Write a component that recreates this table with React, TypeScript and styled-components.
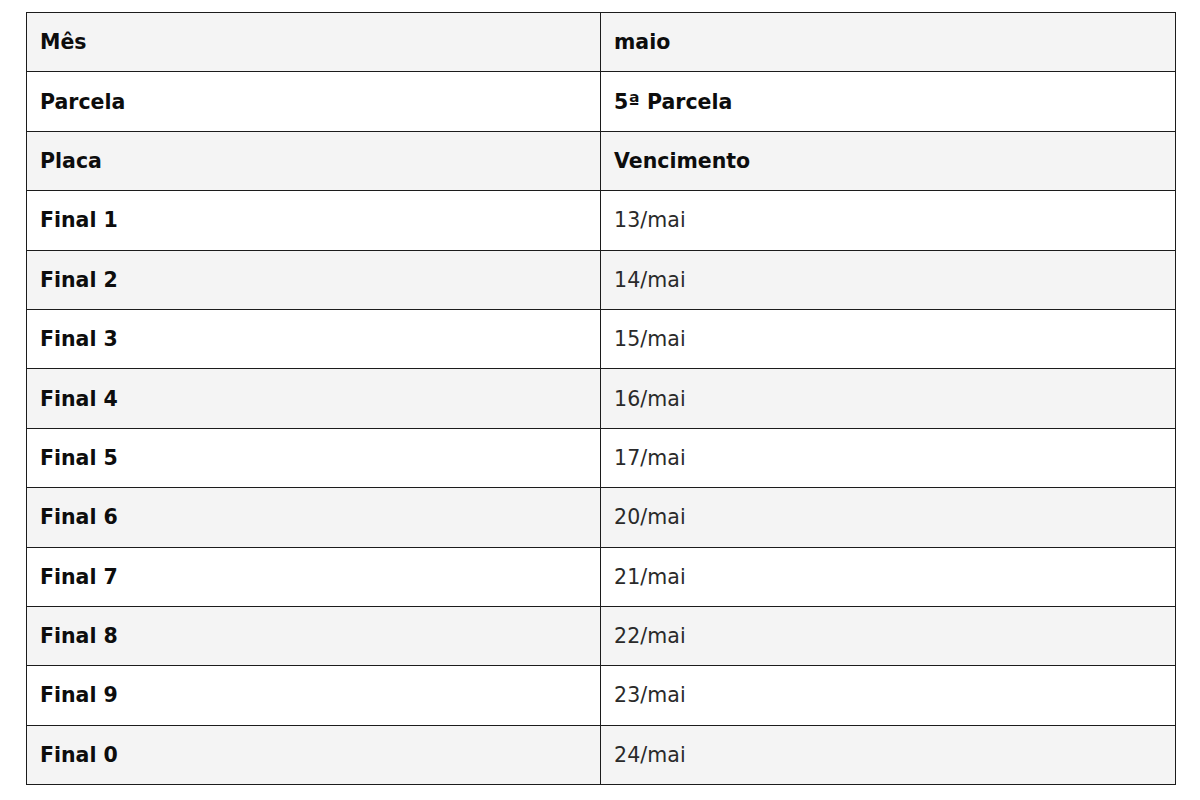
import React from "react";
import styled, { createGlobalStyle } from "styled-components";

const GlobalStyle = createGlobalStyle`
  html, body {
    margin: 0;
    padding: 0;
    background: #ffffff;
  }
`;

const Page = styled.div`
  padding: 12px 24px 0 26px;
  font-family: "DejaVu Sans", "Inter", sans-serif;
`;

const Table = styled.table`
  width: 1150px;
  border-collapse: collapse;
  border: 1px solid #1c1c1c;
  table-layout: fixed;
`;

const Row = styled.tr<{ $shaded: boolean }>`
  height: 59.4px;
  background: ${(p) => (p.$shaded ? "#f4f4f4" : "#ffffff")};
`;

const Cell = styled.td<{ $bold?: boolean }>`
  border: 1px solid #1c1c1c;
  padding: 0 13px;
  vertical-align: middle;
  font-size: 20.5px;
  font-weight: ${(p) => (p.$bold ? 700 : 400)};
  color: ${(p) => (p.$bold ? "#0d0d0d" : "#2a2a2a")};
  letter-spacing: ${(p) => (p.$bold ? "0" : "0.1px")};
  white-space: nowrap;
`;

const FirstCol = styled.col`
  width: 574px;
`;

type Line = { label: string; value: string; boldValue?: boolean };

const lines: Line[] = [
  { label: "Mês", value: "maio", boldValue: true },
  { label: "Parcela", value: "5ª Parcela", boldValue: true },
  { label: "Placa", value: "Vencimento", boldValue: true },
  { label: "Final 1", value: "13/mai" },
  { label: "Final 2", value: "14/mai" },
  { label: "Final 3", value: "15/mai" },
  { label: "Final 4", value: "16/mai" },
  { label: "Final 5", value: "17/mai" },
  { label: "Final 6", value: "20/mai" },
  { label: "Final 7", value: "21/mai" },
  { label: "Final 8", value: "22/mai" },
  { label: "Final 9", value: "23/mai" },
  { label: "Final 0", value: "24/mai" },
];

export default function App() {
  return (
    <>
      <GlobalStyle />
      <Page>
        <Table>
          <colgroup>
            <FirstCol />
            <col />
          </colgroup>
          <tbody>
            {lines.map((l, i) => (
              <Row key={l.label} $shaded={i % 2 === 0}>
                <Cell $bold>{l.label}</Cell>
                <Cell $bold={l.boldValue}>{l.value}</Cell>
              </Row>
            ))}
          </tbody>
        </Table>
      </Page>
    </>
  );
}
